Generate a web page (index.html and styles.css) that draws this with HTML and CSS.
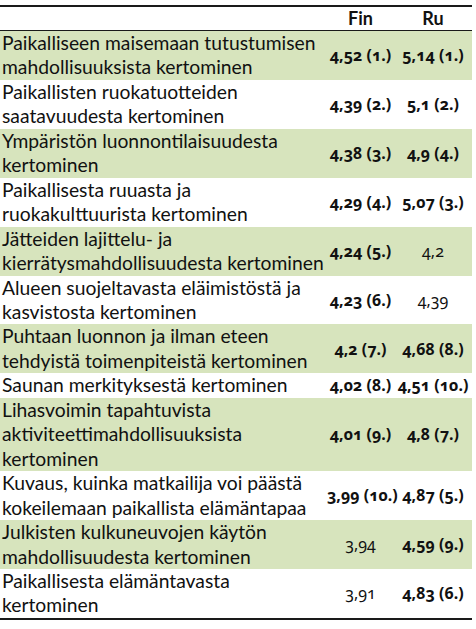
FILE: index.html
```html
<!DOCTYPE html>
<html lang="fi">
<head>
<meta charset="utf-8">
<title>Taulukko</title>
<link rel="stylesheet" href="styles.css">
</head>
<body>
<table class="tbl">
  <colgroup>
    <col class="c-label">
    <col class="c-fin">
    <col class="c-ru">
  </colgroup>
  <thead>
    <tr class="head">
      <th class="label"></th>
      <th class="num">Fin</th>
      <th class="num">Ru</th>
    </tr>
  </thead>
  <tbody>
    <tr class="green"><td class="label">Paikalliseen maisemaan tutustumisen mahdollisuuksista kertominen</td><td class="num b">4,52 (1.)</td><td class="num b">5,14 (1.)</td></tr>
    <tr><td class="label">Paikallisten ruokatuotteiden saatavuudesta kertominen</td><td class="num b">4,39 (2.)</td><td class="num b">5,1 (2.)</td></tr>
    <tr class="green"><td class="label">Ympäristön luonnontilaisuudesta kertominen</td><td class="num b">4,38 (3.)</td><td class="num b">4,9 (4.)</td></tr>
    <tr><td class="label">Paikallisesta ruuasta ja ruokakulttuurista kertominen</td><td class="num b">4,29 (4.)</td><td class="num b">5,07 (3.)</td></tr>
    <tr class="green"><td class="label">Jätteiden lajittelu- ja kierrätysmahdollisuudesta kertominen</td><td class="num b">4,24 (5.)</td><td class="num">4,2</td></tr>
    <tr><td class="label">Alueen suojeltavasta eläimistöstä ja kasvistosta kertominen</td><td class="num b">4,23 (6.)</td><td class="num">4,39</td></tr>
    <tr class="green"><td class="label">Puhtaan luonnon ja ilman eteen tehdyistä toimenpiteistä kertominen</td><td class="num b">4,2 (7.)</td><td class="num b">4,68 (8.)</td></tr>
    <tr><td class="label">Saunan merkityksestä kertominen</td><td class="num b">4,02 (8.)</td><td class="num b">4,51 (10.)</td></tr>
    <tr class="green"><td class="label">Lihasvoimin tapahtuvista aktiviteettimahdollisuuksista kertominen</td><td class="num b">4,01 (9.)</td><td class="num b">4,8 (7.)</td></tr>
    <tr><td class="label">Kuvaus, kuinka matkailija voi päästä kokeilemaan paikallista elämäntapaa</td><td class="num b">3,99 (10.)</td><td class="num b">4,87 (5.)</td></tr>
    <tr class="green"><td class="label">Julkisten kulkuneuvojen käytön mahdollisuudesta kertominen</td><td class="num">3,94</td><td class="num b">4,59 (9.)</td></tr>
    <tr><td class="label">Paikallisesta elämäntavasta kertominen</td><td class="num">3,91</td><td class="num b">4,83 (6.)</td></tr>
  </tbody>
</table>
</body>
</html>
```

FILE: styles.css
```css
html, body {
  margin: 0;
  padding: 0;
  background: #ffffff;
}

body {
  padding-top: 5px;
  font-family: Lato, "Noto Sans", sans-serif;
  color: #111111;
}

.tbl {
  width: 472px;
  border-collapse: collapse;
  table-layout: fixed;
  border-top: 2px solid #1a1a1a;
  border-bottom: 2px solid #1a1a1a;
}

.c-label { width: 327px; }
.c-fin { width: 67px; }
.c-ru { width: 78px; }

.tbl th,
.tbl td {
  padding: 0;
  font-size: 19.3px;
  line-height: 24.45px;
  font-weight: normal;
}

.head th {
  height: 23px;
  line-height: 23px;
  border-bottom: 1px solid #1a1a1a;
}

.label {
  padding-left: 2px !important;
  text-align: left;
  vertical-align: middle;
}

.num {
  text-align: center;
  vertical-align: middle;
  white-space: nowrap;
  font-family: "Noto Sans", Lato, sans-serif;
  font-variant-numeric: oldstyle-nums;
  font-size: 16px !important;
}

.head .num {
  font-family: Lato, "Noto Sans", sans-serif;
  font-weight: bold;
  font-size: 18px !important;
}

.num.b {
  font-weight: bold;
}

.green td {
  background: #d7e4bd;
}
```
